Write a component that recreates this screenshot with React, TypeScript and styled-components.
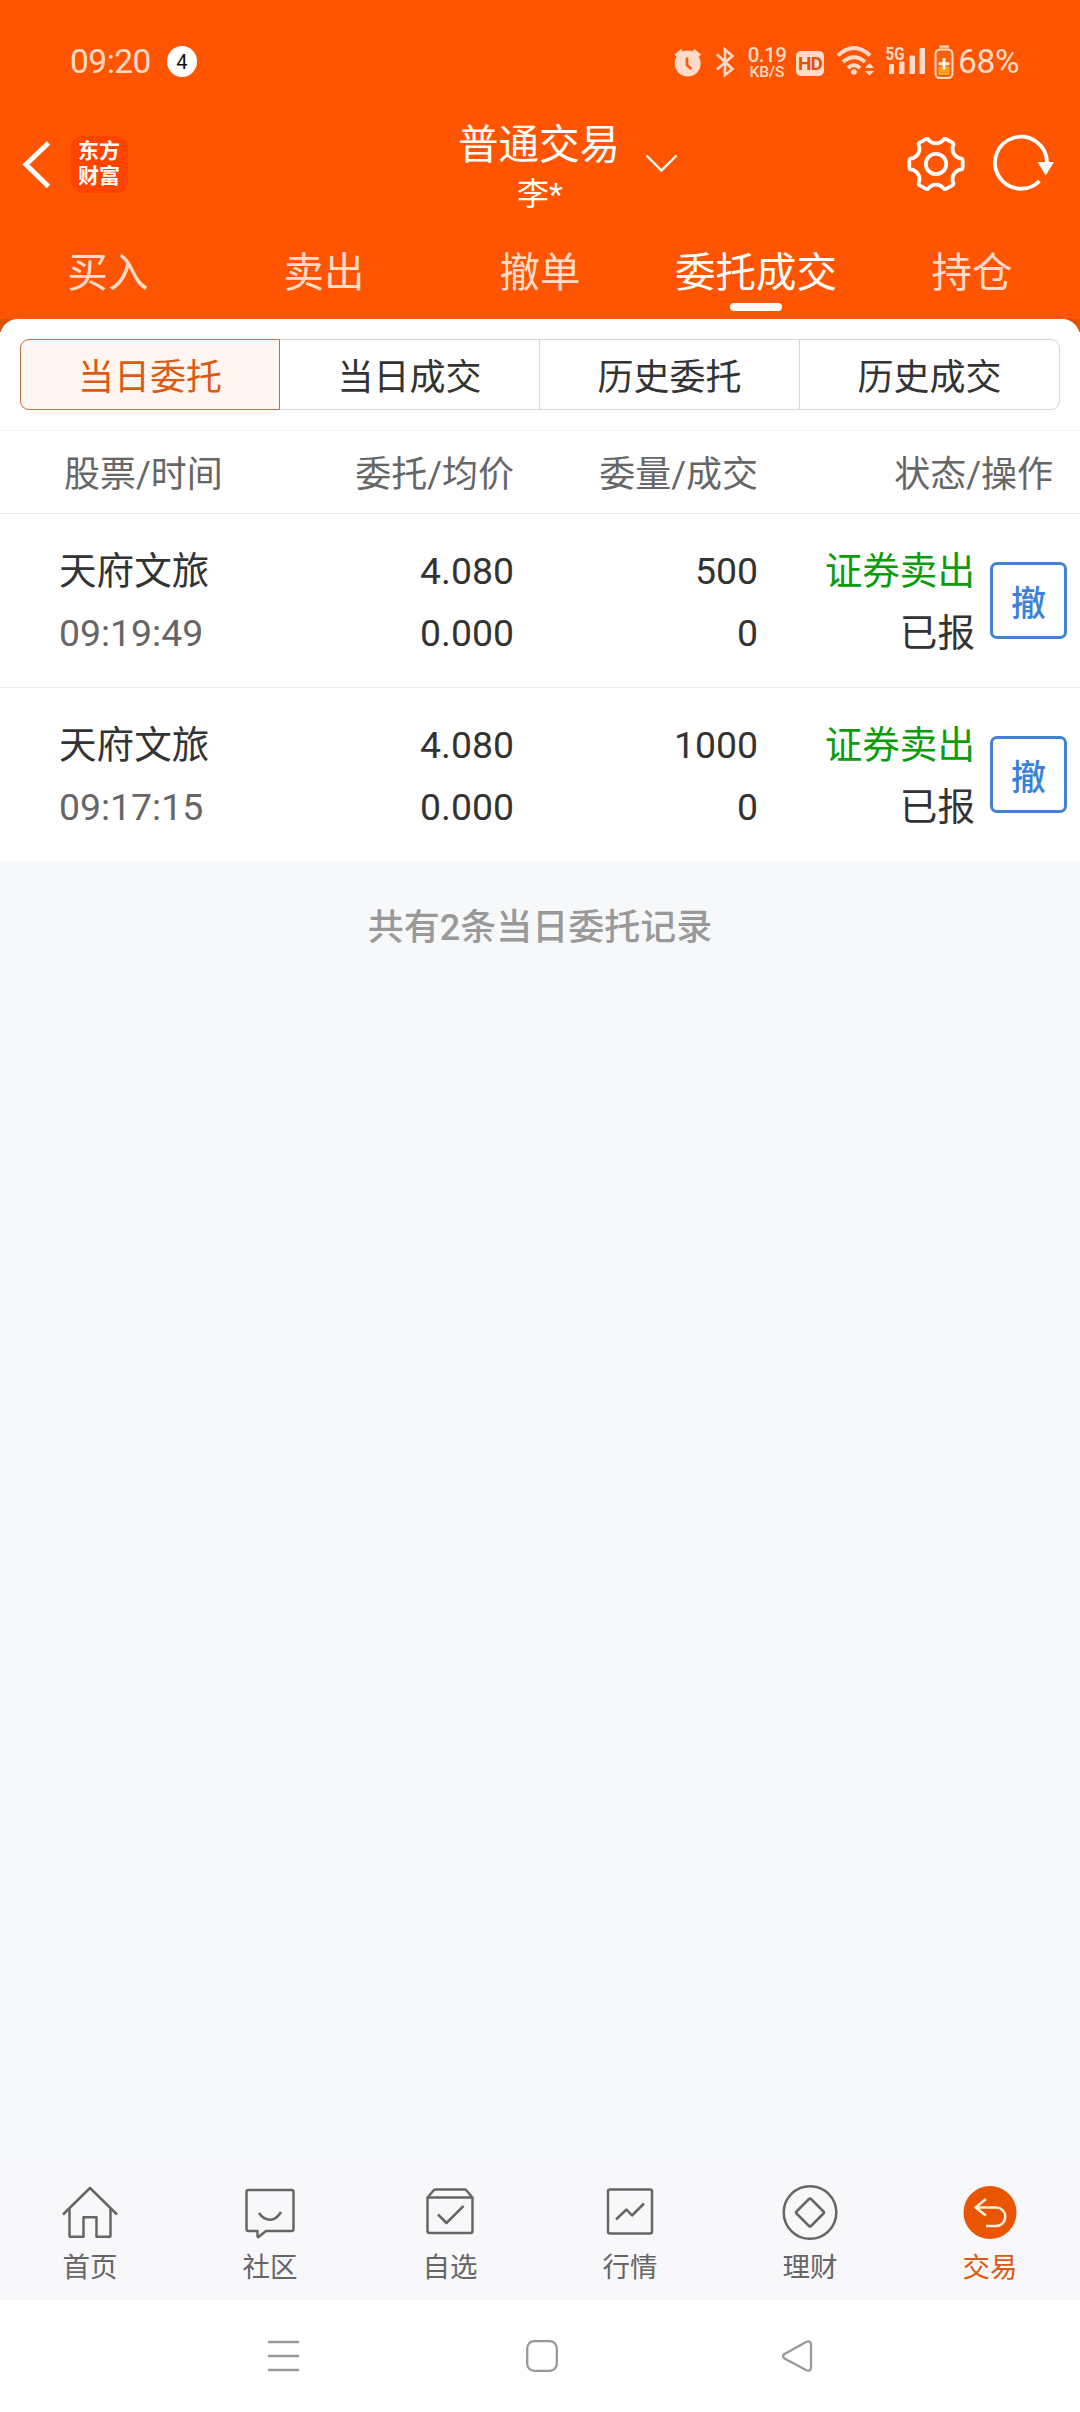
import React from "react";
import styled, { createGlobalStyle } from "styled-components";

const GlobalStyle = createGlobalStyle`
  *, *::before, *::after { box-sizing: border-box; }
  body { margin: 0; background: #f7f8fa; }
`;

const PALE = "#ffdcca";

const Screen = styled.div`
  width: 1080px;
  height: 2412px;
  display: flex;
  flex-direction: column;
  overflow: hidden;
  background: #f7f8fa;
  color: #333;
  font-family: Roboto, "Noto Sans CJK SC", sans-serif;
  font-weight: 400;
  white-space: nowrap;
`;

/* ---------- orange header ---------- */
const Header = styled.header`
  height: 319px;
  background: #ff5500;
  color: #fff;
  display: flex;
  flex-direction: column;
`;

const StatusBar = styled.div`
  height: 114px;
  padding: 10px 58px 0 70px;
  display: flex;
  align-items: center;
  justify-content: space-between;
  color: ${PALE};
`;

const StatusGroup = styled.div`
  display: flex;
  align-items: center;
`;

const Clock = styled.span`
  font-size: 33.5px;
  line-height: 40px;
  letter-spacing: -0.5px;
`;

const Count = styled.span`
  width: 30px;
  height: 31px;
  margin-left: 16px;
  margin-bottom: 2px;
  border-radius: 50%;
  background: #fff;
  color: #111;
  font-size: 20px;
  line-height: 32px;
  text-align: center;
`;

const Glyph = styled.svg<{ $left?: number }>`
  display: block;
  flex: none;
  margin-left: ${(p) => p.$left ?? 0}px;
`;

const Speed = styled.div`
  width: 38px;
  margin-left: 13px;
  display: flex;
  flex-direction: column;
  align-items: center;
  font-weight: 500;
`;
const SpeedValue = styled.span`
  font-size: 20.5px;
  line-height: 20px;
  letter-spacing: -0.5px;
`;
const SpeedUnit = styled.span`
  height: 14px;
  font-size: 15.5px;
  line-height: 14px;
`;

const HdBadge = styled.span`
  width: 28px;
  height: 25px;
  margin-left: 10px;
  margin-top: 2px;
  border-radius: 5px;
  background: ${PALE};
  color: #e0540c;
  font-size: 19px;
  font-weight: 700;
  line-height: 26px;
  text-align: center;
  letter-spacing: -1px;
`;

const Percent = styled.span`
  margin-left: 4px;
  width: 64px;
  font-size: 33.5px;
  line-height: 40px;
  letter-spacing: -0.3px;
`;

const TitleBar = styled.div`
  height: 106px;
  display: grid;
  grid-template-columns: 1fr auto 1fr;
`;

const TitleLeft = styled.div`
  display: flex;
  align-items: center;
  padding-left: 22px;
  padding-bottom: 6px;
`;

const Logo = styled.div`
  width: 57px;
  height: 57px;
  margin-left: 20px;
  padding: 3px 0 0 7px;
  border-radius: 12px;
  background: #ff4300;
  color: #fff;
  font-size: 21px;
  line-height: 25px;
  font-weight: 700;
`;
const LogoLine = styled.div`
  height: 25px;
`;

const Account = styled.div`
  display: flex;
  flex-direction: column;
  align-items: center;
  padding-top: 6px;
`;
const AccountName = styled.div`
  margin-left: -2px;
  font-size: 40.5px;
  line-height: 50px;
`;
const AccountUser = styled.div`
  font-size: 32px;
  line-height: 48px;
`;

const TitleRight = styled.div`
  display: flex;
  align-items: center;
  padding: 0 24px 6px 25px;
`;
const Spacer = styled.div`
  flex: 1;
`;

const Tabs = styled.nav`
  flex: 1;
  display: grid;
  grid-template-columns: repeat(5, 1fr);
`;
const Tab = styled.div<{ $active?: boolean }>`
  display: flex;
  flex-direction: column;
  align-items: center;
  padding-top: 28px;
  font-size: 40.5px;
  line-height: 50px;
  color: ${(p) => (p.$active ? "#fff" : PALE)};
  &::after {
    content: "";
    width: 52px;
    height: 8px;
    margin-top: 5px;
    border-radius: 4px;
    background: ${(p) => (p.$active ? "#fff" : "transparent")};
  }
`;

/* ---------- white sheet ---------- */
const SheetBack = styled.div`
  background: linear-gradient(#dc5208 0 13px, #fff 13px);
`;
const Sheet = styled.section`
  border-radius: 18px 18px 0 0;
  background: #fff;
  padding-top: 20px;
`;

const Segments = styled.div`
  height: 71px;
  margin: 0 20px 20px;
  display: grid;
  grid-template-columns: repeat(4, 1fr);
  grid-template-rows: 71px;
`;
const Segment = styled.div<{ $active?: boolean }>`
  display: flex;
  align-items: center;
  justify-content: center;
  padding-top: 6px;
  border: 1px solid ${(p) => (p.$active ? "#b9713f" : "#d3d6d8")};
  border-left-width: ${(p) => (p.$active ? 1 : 0)}px;
  background: ${(p) => (p.$active ? "#fff6f2" : "#fff")};
  color: ${(p) => (p.$active ? "#dd5a12" : "#333")};
  font-size: 36px;
  line-height: 44px;
  &:first-child { border-radius: 9px 0 0 9px; }
  &:last-child { border-radius: 0 9px 9px 0; }
`;

const TableHead = styled.div`
  height: 84px;
  padding: 5px 27px 0 59px;
  border-top: 1px solid #f5f5f5;
  border-bottom: 1px solid #ececec;
  display: grid;
  grid-template-columns: 220px 235px 244px 1fr;
  align-items: center;
  color: #666;
  font-size: 36px;
  line-height: 44px;
`;
const HeadCell = styled.div<{ $first?: boolean }>`
  text-align: ${(p) => (p.$first ? "left" : "right")};
  padding-left: ${(p) => (p.$first ? 5 : 0)}px;
`;

const Row = styled.div`
  height: 174px;
  padding: 26px 13px 0 59px;
  border-bottom: 1px solid #ececec;
  display: grid;
  grid-template-columns: 220px 235px 244px 217px 1fr;
  line-height: 62px;
  &:last-child { border-bottom-color: #fff; }
`;
const Cell = styled.div<{ $first?: boolean }>`
  text-align: ${(p) => (p.$first ? "left" : "right")};
`;
const Line = styled.div<{ $cjk?: boolean; $tone?: "muted" | "sell" }>`
  height: 62px;
  font-size: ${(p) => (p.$cjk ? 37.6 : 37.4)}px;
  color: ${(p) => (p.$tone === "muted" ? "#666" : p.$tone === "sell" ? "#0a9d0a" : "#333")};
`;
const CancelButton = styled.button`
  width: 77px;
  height: 77px;
  margin: 22px 0 0;
  padding: 8px 0 0;
  justify-self: end;
  border: 3px solid #4183d0;
  border-radius: 7px;
  background: #fff;
  color: #3a81dc;
  font: 500 35px/44px Roboto, "Noto Sans CJK SC", sans-serif;
`;

const Summary = styled.div`
  flex: 1;
  padding-top: 44px;
  text-align: center;
  color: #999;
  font-size: 36px;
  font-weight: 500;
  line-height: 44px;
`;

/* ---------- bottom bars ---------- */
const BottomNav = styled.nav`
  height: 140px;
  background: #f8f8fb;
  display: grid;
  grid-template-columns: repeat(6, 1fr);
`;
const NavItem = styled.div<{ $active?: boolean }>`
  display: flex;
  flex-direction: column;
  align-items: center;
  padding-top: 23px;
  color: ${(p) => (p.$active ? "#dd5a12" : "#666")};
  font-size: 27.5px;
  line-height: 36px;
`;
const NavLabel = styled.span`
  margin-top: 7px;
`;

const SystemBar = styled.footer`
  height: 112px;
  padding: 0 267px;
  background: #fff;
  display: flex;
  align-items: center;
  justify-content: space-between;
`;

/* Six-lobed outline of the settings gear, centred on 0,0. */
const gearPath = (() => {
  const at = (deg: number, r: number) => {
    const a = (deg * Math.PI) / 180;
    return `${(Math.cos(a) * r).toFixed(2)} ${(Math.sin(a) * r).toFixed(2)}`;
  };
  let d = `M${at(-12, 26.2)}`;
  for (let i = 0; i < 6; i++) {
    const t = i * 60;
    d += ` Q${at(t - 9, 27.6)} ${at(t, 26.6)} Q${at(t + 9, 27.6)} ${at(t + 12, 26.2)}`;
    d += ` C${at(t + 18, 19.6)} ${at(t + 42, 19.6)} ${at(t + 48, 26.2)}`;
  }
  return d + "Z";
})();

const navIcons: Record<string, React.ReactNode> = {
  home: (
    <>
      <path d="M-27 1.5 0-25 27 1.5" />
      <path d="M-20.5-4V22.5q0 1.3 1.3 1.3H-6.5V4.2H6.5V23.8H19.2q1.3 0 1.3-1.3V-4" />
    </>
  ),
  chat: (
    <>
      <path d="M-21.5-23H21.5q2 0 2 2V16q0 2-2 2H-4L-11.5 24q-1 .5-1-.8V18H-21.500q-2 0-2-2V-21q0-2 2-2Z" />
      <path d="M-11 0Q-6.500 6.700 0 6.700T11-1" />
    </>
  ),
  watch: (
    <>
      <path d="M-22-16-16.500-22.500q.8-1 2-1H14.500q1.200 0 2 1L22-16" />
      <path d="M-22.500-15.500H22.500V18q0 2-2 2H-20.500q-2 0-2-2Z" />
      <path d="M-12 1.500-3.500 10 13.500-7" />
    </>
  ),
  market: (
    <>
      <rect x="-22" y="-23.500" width="44" height="44" rx="2" />
      <path d="M-14 6.500-3.500-3.500 2 2.500 14-9.500" />
    </>
  ),
  finance: (
    <>
      <circle cy="-.5" r="26.300" />
      <path d="M-1-14q1-1 2 0L13.500-1.500q1 1 0 2L1 13q-1 1-2 0L-13.500.5q-1-1 0-2Z" />
    </>
  ),
  trade: (
    <>
      <circle cy="-.5" r="26.500" fill="#ea5504" stroke="none" />
      <path d="M-4-14-14.500-5.500-4 2.500M-14-5.500H6A9.300 9.300 0 0 1 6 13.100H-4" stroke="#fff0dc" />
    </>
  ),
};

const NavIcon = ({ name }: { name: string }) => (
  <Glyph width="60" height="60" viewBox="-30 -30 60 60" fill="none" stroke="#666" strokeWidth="2.500" strokeLinejoin="round">
    {navIcons[name]}
  </Glyph>
);

const StatusIcons = () => (
  <StatusGroup>
    <Glyph width="28" height="32" viewBox="673 46.500 28 32">
      <circle cx="686.700" cy="64" r="13" fill={PALE} />
      <path d="M674.500 56 681 50.500M699 56 692.500 50.500" stroke={PALE} strokeWidth="2.800" />
      <path d="M686 58V65.500L690.500 69.500" fill="none" stroke="#f0600f" strokeWidth="2.800" />
    </Glyph>
    <Glyph $left={13} width="20" height="32" viewBox="714 46.500 20 32">
      <path d="M716 55 731.500 69.500 724 75.500V50L731.500 56.500 716 70" fill="none" stroke={PALE} strokeWidth="2.600" />
    </Glyph>
    <Speed>
      <SpeedValue>0.19</SpeedValue>
      <SpeedUnit>KB/S</SpeedUnit>
    </Speed>
    <HdBadge>HD</HdBadge>
    <Glyph $left={12} width="40" height="34" viewBox="836 45.500 40 34">
      <g fill="none" stroke={PALE} strokeWidth="4">
        <path d="M838 56Q854 41 870 56" />
        <path d="M843 62.500Q854 53 865 62.500" />
        <path d="M848 68.500Q854 63 860 68.500" />
      </g>
      <circle cx="854" cy="72.500" r="2.800" fill={PALE} />
      <path d="M865 68.500 869.500 63.500 874 68.500ZM865 71.500 869.500 76 874 71.500Z" fill={PALE} />
    </Glyph>
    <Glyph $left={9} width="42" height="34" viewBox="885 45.500 42 34">
      <text x="885.500" y="60.500" fontSize="17.500" fontWeight="700" textLength="19" lengthAdjust="spacingAndGlyphs" fill={PALE} fontFamily="Roboto, sans-serif">
        5G
      </text>
      <g fill={PALE}>
        <rect x="889" y="64.500" width="5" height="10" rx="1" />
        <rect x="899" y="62" width="5.500" height="12.500" rx="1" />
        <rect x="909.500" y="56" width="5.500" height="18.500" rx="1" />
        <rect x="919.500" y="48.500" width="5.500" height="26" rx="1" />
      </g>
    </Glyph>
    <Glyph $left={7} width="20" height="35" viewBox="934 44.500 20 35">
      <rect x="939.500" y="45" width="9.500" height="2.200" fill={PALE} />
      <rect x="935.500" y="49" width="17" height="28.500" rx="4.500" fill="#f0620c" stroke={PALE} strokeWidth="2" />
      <rect x="938.500" y="66" width="11" height="8.500" rx="1" fill="#ffa01c" />
      <path d="M944 57.500V69M938.500 63.200H949.500" stroke="#fff0e4" strokeWidth="3" />
    </Glyph>
    <Percent>68%</Percent>
  </StatusGroup>
);

const tabs = ["买入", "卖出", "撤单", "委托成交", "持仓"];
const segments = ["当日委托", "当日成交", "历史委托", "历史成交"];
const heads = ["股票/时间", "委托/均价", "委量/成交", "状态/操作"];
const orders = [
  { name: "天府文旅", time: "09:19:49", price: "4.080", avg: "0.000", qty: "500", done: "0", side: "证券卖出", state: "已报" },
  { name: "天府文旅", time: "09:17:15", price: "4.080", avg: "0.000", qty: "1000", done: "0", side: "证券卖出", state: "已报" },
];
const navs = [
  ["home", "首页"],
  ["chat", "社区"],
  ["watch", "自选"],
  ["market", "行情"],
  ["finance", "理财"],
  ["trade", "交易"],
];

export default function App() {
  return (
    <Screen>
      <GlobalStyle />
      <Header>
        <StatusBar>
          <StatusGroup>
            <Clock>09:20</Clock>
            <Count>4</Count>
          </StatusGroup>
          <StatusIcons />
        </StatusBar>
        <TitleBar>
          <TitleLeft>
            <Glyph width="29" height="50" viewBox="22 139 29 50">
              <path d="M48.500 143 26 164.500 48.500 186.500" fill="none" stroke="#fff" strokeWidth="5" />
            </Glyph>
            <Logo>
              <LogoLine>东方</LogoLine>
              <LogoLine>财富</LogoLine>
            </Logo>
          </TitleLeft>
          <Account>
            <AccountName>普通交易</AccountName>
            <AccountUser>李*</AccountUser>
          </Account>
          <TitleRight>
            <Glyph width="34" height="20" viewBox="646 154 34 20">
              <path d="M647.500 155.500 662.500 170.500 677.500 155.500" fill="none" stroke="#fff" strokeWidth="2.400" />
            </Glyph>
            <Spacer />
            <Glyph width="60" height="60" viewBox="-30 -30 60 60" fill="none" stroke="#fff" strokeWidth="3.800" strokeLinejoin="round">
              <path d={gearPath} />
              <circle r="10.200" />
            </Glyph>
            <Glyph $left={26} width="64" height="60" viewBox="992 134 64 60">
              <path d="M1047 162A26 26 0 1 0 1039.500 181" fill="none" stroke="#fff" strokeWidth="3.800" />
              <path d="M1037.500 162H1054L1045.700 175.500Z" fill="#fff" />
            </Glyph>
          </TitleRight>
        </TitleBar>
        <Tabs>
          {tabs.map((t) => (
            <Tab key={t} $active={t === "委托成交"}>
              {t}
            </Tab>
          ))}
        </Tabs>
      </Header>

      <SheetBack>
        <Sheet>
          <Segments>
            {segments.map((s, i) => (
              <Segment key={s} $active={i === 0}>
                {s}
              </Segment>
            ))}
          </Segments>
          <TableHead>
            {heads.map((h, i) => (
              <HeadCell key={h} $first={i === 0}>
                {h}
              </HeadCell>
            ))}
          </TableHead>
          {orders.map((o) => (
            <Row key={o.time}>
              <Cell $first>
                <Line $cjk>{o.name}</Line>
                <Line $tone="muted">{o.time}</Line>
              </Cell>
              <Cell>
                <Line>{o.price}</Line>
                <Line>{o.avg}</Line>
              </Cell>
              <Cell>
                <Line>{o.qty}</Line>
                <Line>{o.done}</Line>
              </Cell>
              <Cell>
                <Line $cjk $tone="sell">{o.side}</Line>
                <Line $cjk>{o.state}</Line>
              </Cell>
              <CancelButton>撤</CancelButton>
            </Row>
          ))}
        </Sheet>
      </SheetBack>

      <Summary>共有2条当日委托记录</Summary>

      <BottomNav>
        {navs.map(([icon, label]) => (
          <NavItem key={icon} $active={icon === "trade"}>
            <NavIcon name={icon} />
            <NavLabel>{label}</NavLabel>
          </NavItem>
        ))}
      </BottomNav>

      <SystemBar>
        <Glyph width="33" height="34" viewBox="0 0 33 34" stroke="#999" strokeWidth="2.600" strokeLinecap="round">
          <path d="M2 3H31M2 17H31M2 31H31" />
        </Glyph>
        <Glyph $left={2} width="34" height="34" viewBox="0 0 34 34" fill="none" stroke="#999" strokeWidth="2.300">
          <rect x="2.200" y="2.200" width="29.600" height="29.600" rx="7" />
        </Glyph>
        <Glyph width="32" height="34" viewBox="0 0 32 34" fill="none" stroke="#999" strokeWidth="2.300">
          <path d="M3.500 15 25 3Q30 1 30 6V28Q30 33 25 31L3.500 19.500Q.5 17.300 3.500 15Z" />
        </Glyph>
      </SystemBar>
    </Screen>
  );
}
